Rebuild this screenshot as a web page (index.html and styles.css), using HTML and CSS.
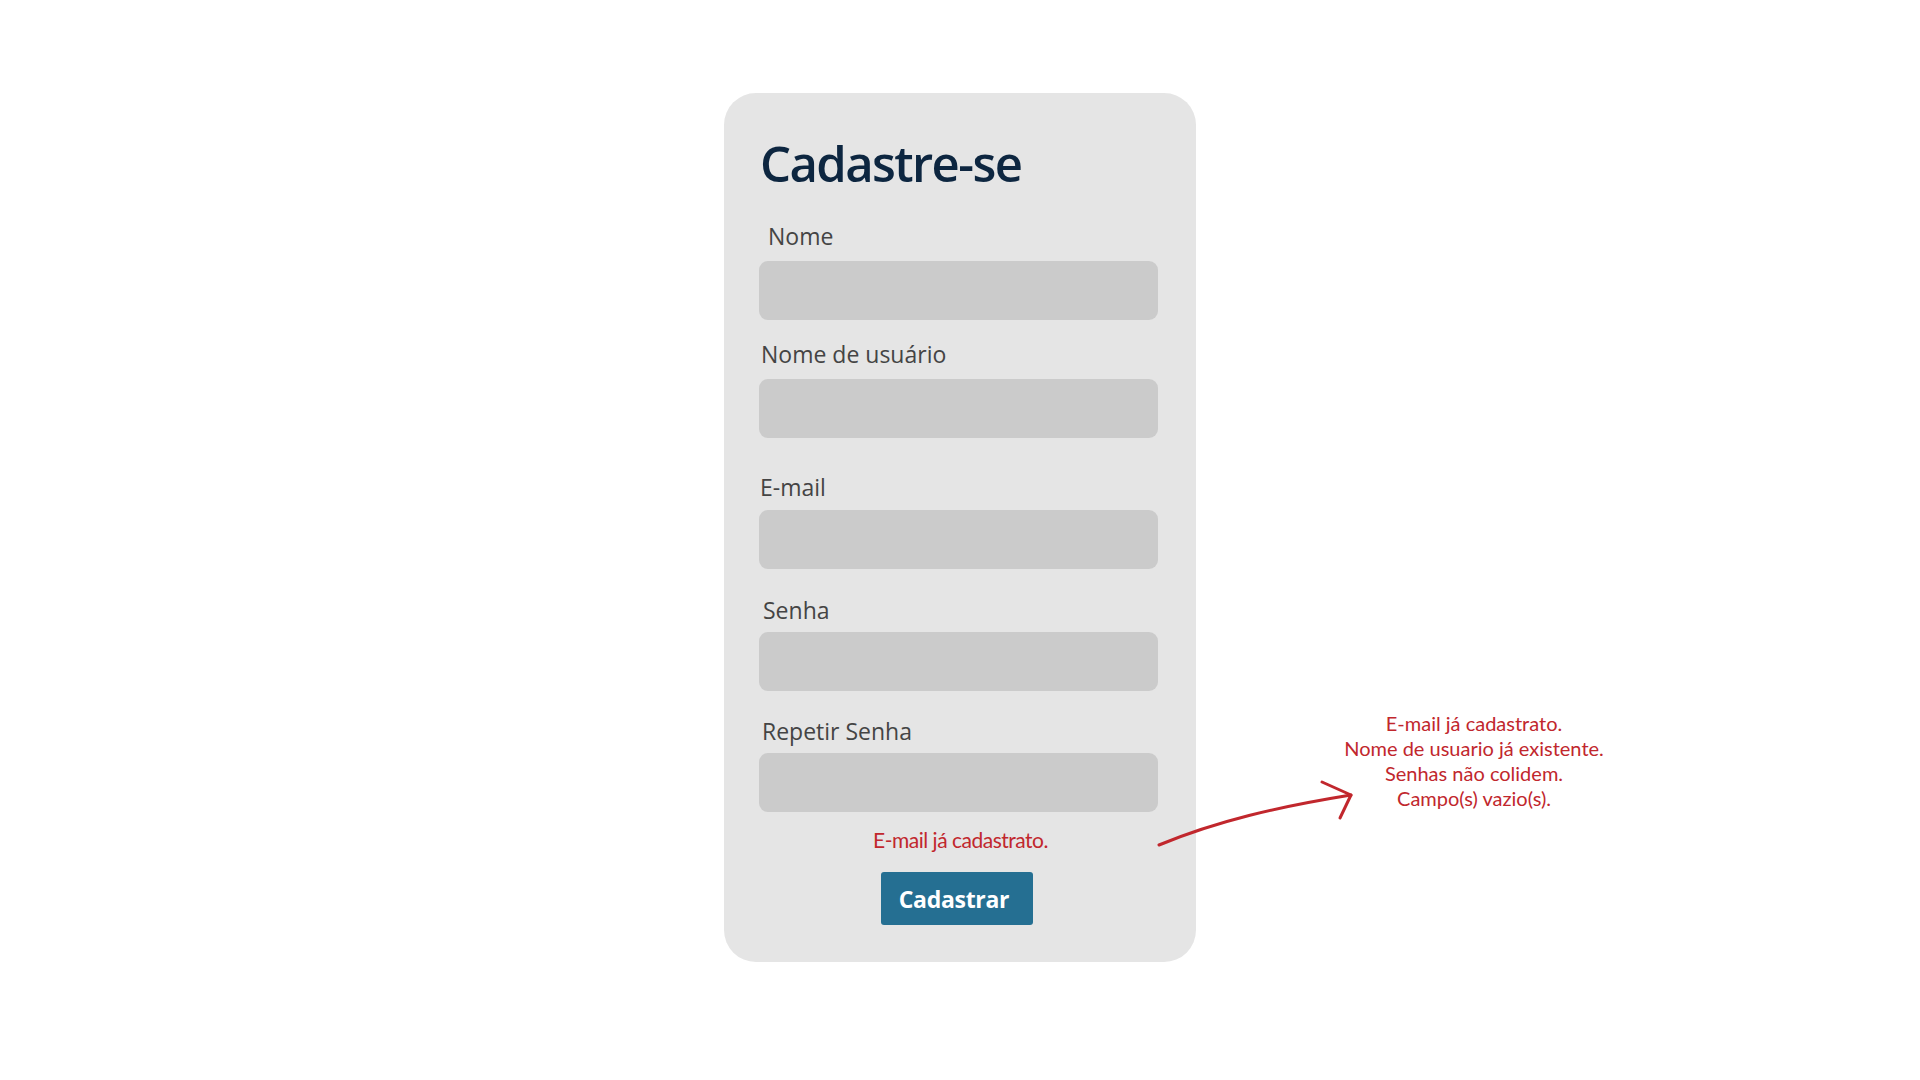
FILE: index.html
```html
<!DOCTYPE html>
<html lang="pt-BR">
<head>
<meta charset="utf-8">
<title>Cadastre-se</title>
<link rel="stylesheet" href="styles.css">
</head>
<body>
<main class="canvas">
  <section class="card">
    <h1 class="card-title">Cadastre-se</h1>
    <div class="field field--first">
      <label class="field-label field-label--nome">Nome</label>
      <div class="field-input"></div>
    </div>
    <div class="field field--user">
      <label class="field-label field-label--user">Nome de usuário</label>
      <div class="field-input"></div>
    </div>
    <div class="field field--email">
      <label class="field-label field-label--email">E-mail</label>
      <div class="field-input"></div>
    </div>
    <div class="field field--senha">
      <label class="field-label field-label--senha">Senha</label>
      <div class="field-input"></div>
    </div>
    <div class="field field--repetir">
      <label class="field-label field-label--repetir">Repetir Senha</label>
      <div class="field-input"></div>
    </div>
    <p class="error-msg">E-mail já cadastrato.</p>
    <button class="submit-btn" type="button">Cadastrar</button>
  </section>

  <svg class="note-arrow" width="220" height="90" viewBox="0 0 220 90" fill="none">
    <path d="M2 68 C 60 44, 120 30, 194 18" stroke="#c1272d" stroke-width="3" stroke-linecap="round"/>
    <path d="M165 5 L194 18 L183 41" stroke="#c1272d" stroke-width="3" stroke-linecap="round" stroke-linejoin="round"/>
  </svg>
  <div class="note-text">
    <p>E-mail já cadastrato.</p>
    <p>Nome de usuario já existente.</p>
    <p>Senhas não colidem.</p>
    <p>Campo(s) vazio(s).</p>
  </div>
</main>
</body>
</html>
```

FILE: styles.css
```css
* { box-sizing: border-box; }
html, body { margin: 0; padding: 0; background: #ffffff; }
body { width: 1920px; height: 1080px; overflow: hidden; }

.canvas {
  position: relative;
  width: 1920px;
  height: 1080px;
  display: flex;
  justify-content: center;
  align-items: flex-start;
  padding-top: 93px;
}

.card {
  width: 472px;
  height: 869px;
  background: #e5e5e5;
  border-radius: 32px;
  padding: 40px 38px 0 35px;
  display: flex;
  flex-direction: column;
}

.card-title {
  margin: 0 0 0 1px;
  font-family: "Open Sans", "Noto Sans", sans-serif;
  font-weight: 600;
  font-size: 49px;
  line-height: 60px;
  letter-spacing: -1.6px;
  color: #0d2640;
}

.field { display: flex; flex-direction: column; }
.field--first { margin-top: 29px; }
.field--user { margin-top: 20px; }
.field--email { margin-top: 35px; }
.field--senha { margin-top: 27px; }
.field--repetir { margin-top: 26px; }

.field-label {
  font-family: "Open Sans", "Noto Sans", sans-serif;
  font-size: 23px;
  line-height: 28px;
  color: #444444;
  margin-bottom: 11px;
}
.field-label--nome { margin-left: 9px; }
.field-label--user { margin-left: 2px; }
.field-label--email { margin-left: 1px; margin-bottom: 9px; }
.field-label--senha { margin-left: 4px; margin-bottom: 8px; }
.field-label--repetir { margin-left: 3px; margin-bottom: 8px; }

.field-input {
  width: 399px;
  height: 59px;
  background: #cbcbcb;
  border-radius: 9px;
}

.error-msg {
  margin: 14px 0 0 0;
  padding-left: 4px;
  text-align: center;
  font-family: Lato, "Open Sans", sans-serif;
  font-size: 21px;
  line-height: 28px;
  color: #c1272d;
  letter-spacing: -0.5px;
}

.submit-btn {
  align-self: center;
  margin-top: 18px;
  margin-right: 3px;
  width: 152px;
  height: 53px;
  border: none;
  border-radius: 3px;
  background: #256f92;
  color: #ffffff;
  font-family: "Open Sans", "Noto Sans", sans-serif;
  font-weight: 700;
  font-size: 23px;
  letter-spacing: -0.3px;
  padding: 0 6px 0 0;
}

.note-arrow {
  position: absolute;
  left: 1157px;
  top: 777px;
}

.note-text {
  position: absolute;
  left: 1324px;
  top: 711px;
  width: 300px;
  text-align: center;
  font-family: Lato, "Open Sans", sans-serif;
  font-size: 20px;
  line-height: 25px;
  color: #c1272d;
  letter-spacing: 0;
}
.note-text p { margin: 0; }
```
